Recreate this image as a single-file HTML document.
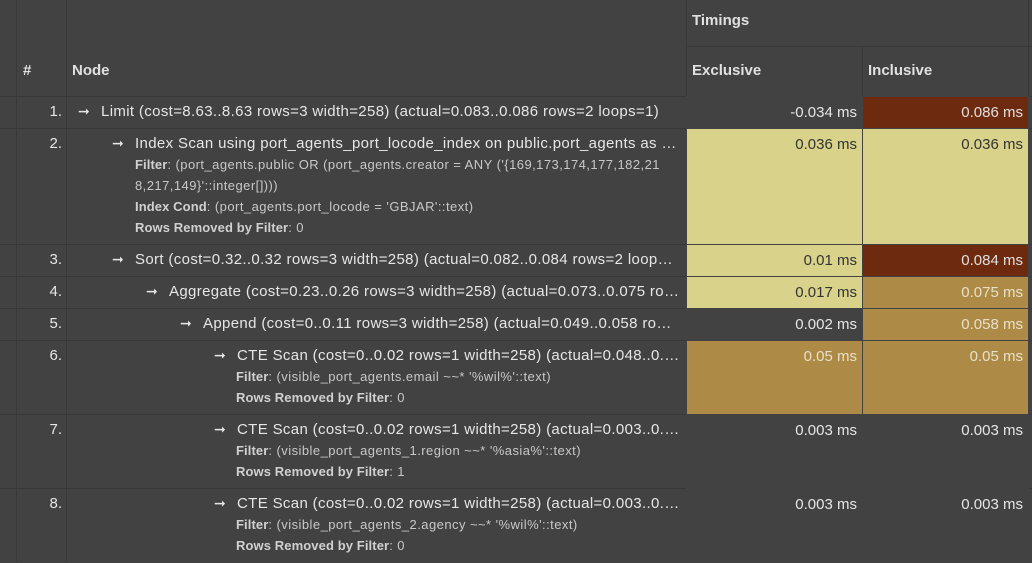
<!DOCTYPE html>
<html><head><meta charset="utf-8"><style>
html,body{margin:0;padding:0;background:#424242;width:1032px;height:562px;overflow:hidden;font-family:"Liberation Sans",Arial,sans-serif;color:#e6e6e6;}
.a{position:absolute;box-sizing:border-box;}
.hl{position:absolute;height:1px;background:#383838;}
.vl{position:absolute;width:1px;background:#383838;}
.h{font-weight:bold;font-size:15px;color:#e0e0e0;}
.num{font-size:15px;text-align:right;width:46px;left:16px;}
.node{font-size:15px;letter-spacing:0.35px;white-space:nowrap;overflow:hidden;text-overflow:ellipsis;}
.ar{display:inline-block;width:23px;letter-spacing:0;font-size:14px;}
.d{font-size:13px;letter-spacing:0.45px;color:#c8c8c8;line-height:21px;white-space:nowrap;}
.d b{color:#d0d0d0;letter-spacing:0.1px;}
.t{font-size:15px;text-align:right;padding:7px 5px 0 0;border:1px solid #424242;}
.y{background:#d9d28a;color:#333;}
.r{background:#6e2a0e;color:#e0e0e0;}
.br{background:#ad8a45;color:#e8e0c8;}
</style></head><body>
<div class="vl" style="left:16px;top:0;height:562px"></div>
<div class="vl" style="left:66px;top:0;height:562px"></div>
<div class="vl" style="left:686px;top:0;height:562px"></div>
<div class="vl" style="left:862px;top:46px;height:516px"></div>
<div class="vl" style="left:1028px;top:0;height:562px"></div>
<div class="hl" style="left:686px;top:46px;width:346px"></div>
<div class="hl" style="left:0;top:96px;width:1032px"></div>
<div class="hl" style="left:0;top:128px;width:1032px"></div>
<div class="hl" style="left:0;top:244px;width:1032px"></div>
<div class="hl" style="left:0;top:276px;width:1032px"></div>
<div class="hl" style="left:0;top:308px;width:1032px"></div>
<div class="hl" style="left:0;top:340px;width:1032px"></div>
<div class="hl" style="left:0;top:414px;width:1032px"></div>
<div class="hl" style="left:0;top:488px;width:1032px"></div>

<div class="a h" style="left:692px;top:12px">Timings</div>
<div class="a h" style="left:23px;top:62px">#</div>
<div class="a h" style="left:72px;top:62px">Node</div>
<div class="a h" style="left:692px;top:62px">Exclusive</div>
<div class="a h" style="left:868px;top:62px">Inclusive</div>

<div class="a t" style="left:686px;top:96px;width:177px;height:33px">-0.034 ms</div>
<div class="a t r" style="left:862px;top:96px;width:167px;height:33px">0.086 ms</div>
<div class="a t y" style="left:686px;top:128px;width:177px;height:117px">0.036 ms</div>
<div class="a t y" style="left:862px;top:128px;width:167px;height:117px">0.036 ms</div>
<div class="a t y" style="left:686px;top:244px;width:177px;height:33px">0.01 ms</div>
<div class="a t r" style="left:862px;top:244px;width:167px;height:33px">0.084 ms</div>
<div class="a t y" style="left:686px;top:276px;width:177px;height:33px">0.017 ms</div>
<div class="a t br" style="left:862px;top:276px;width:167px;height:33px">0.075 ms</div>
<div class="a t" style="left:686px;top:308px;width:177px;height:33px">0.002 ms</div>
<div class="a t br" style="left:862px;top:308px;width:167px;height:33px">0.058 ms</div>
<div class="a t br" style="left:686px;top:340px;width:177px;height:75px">0.05 ms</div>
<div class="a t br" style="left:862px;top:340px;width:167px;height:75px">0.05 ms</div>
<div class="a t" style="left:686px;top:414px;width:177px;height:75px">0.003 ms</div>
<div class="a t" style="left:862px;top:414px;width:167px;height:75px">0.003 ms</div>
<div class="a t" style="left:686px;top:488px;width:177px;height:75px">0.003 ms</div>
<div class="a t" style="left:862px;top:488px;width:167px;height:75px">0.003 ms</div>

<div class="a num" style="top:103px">1.</div>
<div class="a node" style="left:78px;top:103px;width:602px"><span class="ar">➞</span>Limit (cost=8.63..8.63 rows=3 width=258) (actual=0.083..0.086 rows=2 loops=1)</div>

<div class="a num" style="top:135px">2.</div>
<div class="a node" style="left:112px;top:135px;width:568px"><span class="ar">➞</span>Index Scan using port_agents_port_locode_index on public.port_agents as port_agents</div>
<div class="a d" style="left:135px;top:154px"><b>Filter</b>: (port_agents.public OR (port_agents.creator = ANY ('{169,173,174,177,182,21<br>8,217,149}'::integer[])))<br><b>Index Cond</b>: (port_agents.port_locode = 'GBJAR'::text)<br><b>Rows Removed by Filter</b>: 0</div>

<div class="a num" style="top:251px">3.</div>
<div class="a node" style="left:112px;top:251px;width:568px"><span class="ar">➞</span>Sort (cost=0.32..0.32 rows=3 width=258) (actual=0.082..0.084 rows=2 loops=1)</div>

<div class="a num" style="top:283px">4.</div>
<div class="a node" style="left:146px;top:283px;width:534px"><span class="ar">➞</span>Aggregate (cost=0.23..0.26 rows=3 width=258) (actual=0.073..0.075 rows=2 loops=1)</div>

<div class="a num" style="top:315px">5.</div>
<div class="a node" style="left:180px;top:315px;width:500px"><span class="ar">➞</span>Append (cost=0..0.11 rows=3 width=258) (actual=0.049..0.058 rows=2 loops=1)</div>

<div class="a num" style="top:347px">6.</div>
<div class="a node" style="left:214px;top:347px;width:466px"><span class="ar">➞</span>CTE Scan (cost=0..0.02 rows=1 width=258) (actual=0.048..0.05 rows=1 loops=1)</div>
<div class="a d" style="left:236px;top:366px"><b>Filter</b>: (visible_port_agents.email ~~* '%wil%'::text)<br><b>Rows Removed by Filter</b>: 0</div>

<div class="a num" style="top:421px">7.</div>
<div class="a node" style="left:214px;top:421px;width:466px"><span class="ar">➞</span>CTE Scan (cost=0..0.02 rows=1 width=258) (actual=0.003..0.003 rows=1 loops=1)</div>
<div class="a d" style="left:236px;top:440px"><b>Filter</b>: (visible_port_agents_1.region ~~* '%asia%'::text)<br><b>Rows Removed by Filter</b>: 1</div>

<div class="a num" style="top:495px">8.</div>
<div class="a node" style="left:214px;top:495px;width:466px"><span class="ar">➞</span>CTE Scan (cost=0..0.02 rows=1 width=258) (actual=0.003..0.003 rows=1 loops=1)</div>
<div class="a d" style="left:236px;top:514px"><b>Filter</b>: (visible_port_agents_2.agency ~~* '%wil%'::text)<br><b>Rows Removed by Filter</b>: 0</div>
</body></html>
